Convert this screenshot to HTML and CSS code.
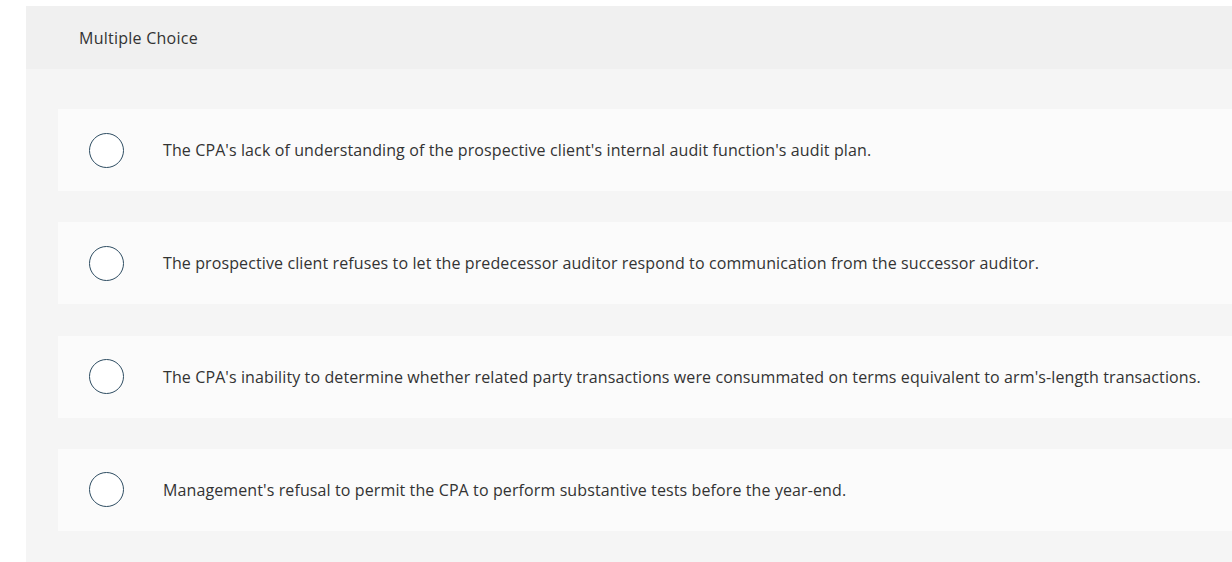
FILE: index.html
```html
<!DOCTYPE html>
<html>
<head>
<meta charset="utf-8">
<link rel="stylesheet" href="styles.css">
</head>
<body>
<div class="question">
  <div class="q-header">Multiple Choice</div>
  <div class="q-body">
    <div class="option"><span class="radio"></span><span class="label">The CPA's lack of understanding of the prospective client's internal audit function's audit plan.</span></div>
    <div class="option"><span class="radio"></span><span class="label">The prospective client refuses to let the predecessor auditor respond to communication from the successor auditor.</span></div>
    <div class="option"><span class="radio"></span><span class="label">The CPA's inability to determine whether related party transactions were consummated on terms equivalent to arm's-length transactions.</span></div>
    <div class="option"><span class="radio"></span><span class="label">Management's refusal to permit the CPA to perform substantive tests before the year-end.</span></div>
  </div>
</div>
</body>
</html>
```
FILE: styles.css
```css
html, body {
  margin: 0;
  padding: 0;
  background: #ffffff;
  overflow: hidden;
  width: 1232px;
  height: 562px;
}
.question {
  margin: 6px 0 0 26px;
  width: 1206px;
  overflow: hidden;
  font-family: "Open Sans", Lato, sans-serif;
  color: #333333;
}
.q-header {
  background: #f0f0f0;
  height: 63px;
  padding-left: 53px;
  display: flex;
  align-items: center;
  font-size: 16px;
  letter-spacing: 0.25px;
  box-sizing: border-box;
}
.q-body {
  background: #f5f5f5;
  padding: 40px 0 0 32px;
  display: flex;
  flex-direction: column;
  gap: 31.33px;
  height: 493px;
  box-sizing: border-box;
}
.option {
  background: #fbfbfb;
  height: 82px;
  display: flex;
  align-items: center;
  padding-left: 31px;
  box-sizing: border-box;
  flex: none;
}
.radio {
  width: 35px;
  height: 35px;
  border: 1.5px solid #2e4d62;
  border-radius: 50%;
  box-sizing: border-box;
  background: #ffffff;
  flex: none;
}
.label {
  margin-left: 39px;
  font-size: 16px;
  letter-spacing: 0.11px;
  white-space: nowrap;
}
```
